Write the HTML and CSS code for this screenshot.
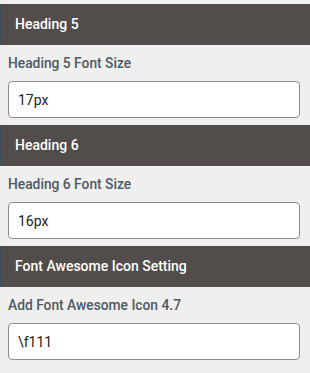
FILE: index.html
```html
<!DOCTYPE html>
<html lang="en">
<head>
  <meta charset="UTF-8">
  <title>Typography Settings</title>
  <link rel="stylesheet" href="styles.css">
</head>
<body>
  <div class="section">
    <h3 class="section-title">Heading 5</h3>
    <div class="form-group">
      <label for="h5-size">Heading 5 Font Size</label>
      <input type="text" id="h5-size" value="17px">
    </div>
  </div>

  <div class="section">
    <h3 class="section-title">Heading 6</h3>
    <div class="form-group">
      <label for="h6-size">Heading 6 Font Size</label>
      <input type="text" id="h6-size" value="16px">
    </div>
  </div>

  <div class="section">
    <h3 class="section-title">Font Awesome Icon Setting</h3>
    <div class="form-group">
      <label for="fa-icon">Add Font Awesome Icon 4.7</label>
      <input type="text" id="fa-icon" value="\f111">
    </div>
  </div>
</body>
</html>
```

FILE: styles.css
```css
body {
  font-family: Roboto, "Noto Sans", sans-serif;
  background-color: #efefef;
  margin: 0;
  padding-top: 4px;
}
.section {
  margin-bottom: 7px;
}
.section-title {
  margin: 0;
  height: 41px;
  line-height: 41px;
  padding-left: 14px;
  background-color: #524c4a;
  border-left: 1px solid #3c4b58;
  color: #fff;
  font-size: 14px;
  font-weight: 500;
}
.form-group {
  padding: 0 10px 0 8px;
}
label {
  display: block;
  height: 36px;
  line-height: 36px;
  color: #4f5963;
  font-size: 13.8px;
  font-weight: 500;
}
input[type="text"] {
  display: block;
  box-sizing: border-box;
  width: 100%;
  height: 37px;
  padding: 0 9px;
  border: 1px solid #8c8c8c;
  border-radius: 4px;
  background-color: #fff;
  font-family: Roboto, "Noto Sans", sans-serif;
  font-size: 14px;
  color: #222;
}
```
